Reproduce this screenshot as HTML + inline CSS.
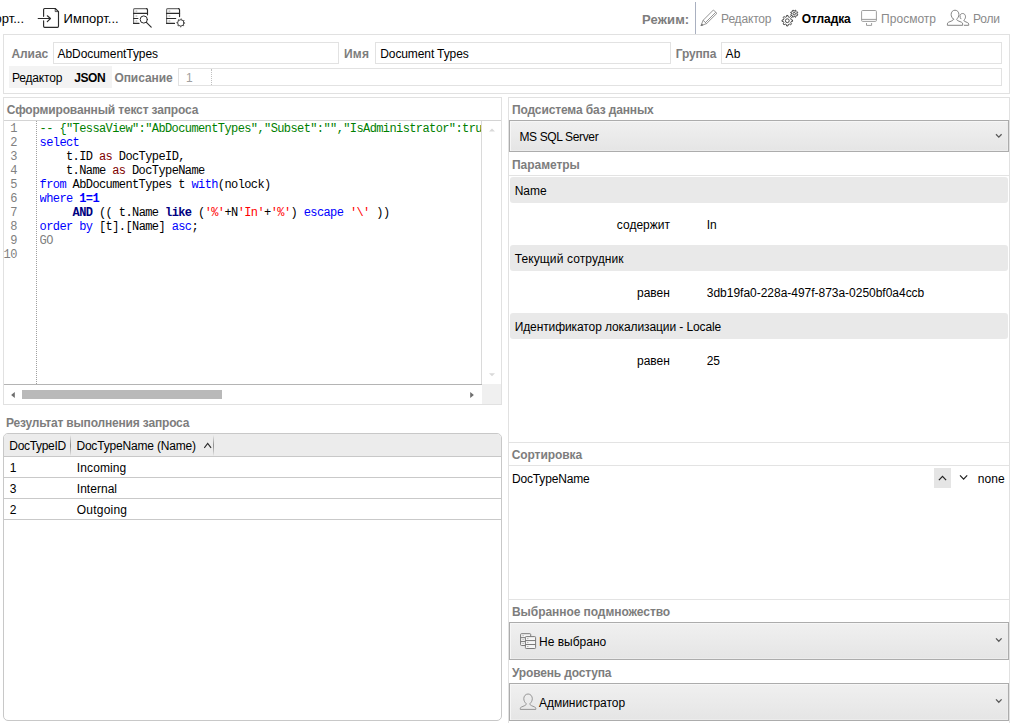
<!DOCTYPE html>
<html><head><meta charset="utf-8"><title>View editor</title>
<style>
html,body{margin:0;padding:0;}
body{width:1012px;height:723px;overflow:hidden;background:#fff;position:relative;font-family:"Liberation Sans", sans-serif;font-size:12px;color:#000;}
.t{position:absolute;white-space:pre;line-height:16px;}
.b{position:absolute;box-sizing:border-box;}

.p{border:1px solid #e1e1e1;background:#fff;}
.in{border:1px solid #e2e2e2;background:#fff;}
.hl{height:1px;background:#e3e3e3;}
.bar{background:#e9e9e9;border-radius:3px;left:510px;width:498px;height:26px;}
.cb{border:1px solid #acacac;background:linear-gradient(#f0f0f0,#e5e5e5);left:509px;width:500px;box-shadow:inset 1px 1px 0 #f6f6f6, inset -1px -1px 0 #ececec;}
.code{position:absolute;left:39.6px;top:122px;width:441px;height:262px;overflow:hidden;font-family:"Liberation Mono", monospace;font-size:12px;letter-spacing:-0.6px;line-height:14px;white-space:pre;color:#000;}
.ln{position:absolute;left:3.5px;top:122px;width:13.3px;text-align:right;font-family:"Liberation Mono", monospace;font-size:12px;letter-spacing:-0.6px;line-height:14px;white-space:pre;color:#808080;}
.c{color:#008000}.k{color:#0000ff}.m{color:#800000}.s{color:#ff0000}.n{color:#000080;font-weight:bold}.kb{color:#0000ff;font-weight:bold}.g{color:#808080}

</style></head><body>
<div class="b p" style="left:3px;top:34px;width:1007px;height:60px;"></div>
<div class="b in" style="left:53px;top:42px;width:286px;height:22px;"></div>
<div class="b in" style="left:375px;top:42px;width:296px;height:22px;"></div>
<div class="b in" style="left:721px;top:42px;width:281px;height:22px;"></div>
<div class="b " style="left:9px;top:66px;width:103px;height:22px;background:#f3f3f3;"></div>
<div class="b in" style="left:178px;top:68px;width:824px;height:18px;"></div>
<div class="b " style="left:211px;top:69px;width:1px;height:16px;border-left:1px dotted #c0c0c0;"></div>
<div class="b " style="left:695px;top:2px;width:1px;height:32px;background:#a9b0c0;"></div>
<div class="b p" style="left:3px;top:97px;width:499px;height:308px;"></div>
<div class="b hl" style="left:4px;top:120px;width:497px;height:1px;background:#d4d4d4;"></div>
<div class="b " style="left:4px;top:384px;width:478px;height:1px;background:#b4b4b4;"></div>
<div class="b " style="left:481px;top:121px;width:1px;height:263px;background:#dadada;"></div>
<div class="b " style="left:482px;top:384px;width:19px;height:20px;background:#f0f0f0;"></div>
<div class="b " style="left:22px;top:390px;width:200px;height:9px;background:#b9b9b9;"></div>
<div class="b " style="left:36px;top:121px;width:1px;height:263px;border-left:1px dotted #a0a0a0;"></div>
<div class="b " style="left:3px;top:433px;width:499px;height:288px;border:1px solid #c8c8c8;border-radius:5px;background:#fff;"></div>
<div class="b " style="left:4px;top:434px;width:497px;height:22px;background:#ececec;border-radius:4px 4px 0 0;"></div>
<div class="b " style="left:4px;top:456px;width:497px;height:1px;background:#c8c8c8;"></div>
<div class="b " style="left:4px;top:477px;width:497px;height:1px;background:#c9c9c9;"></div>
<div class="b " style="left:4px;top:498px;width:497px;height:1px;background:#c9c9c9;"></div>
<div class="b " style="left:4px;top:519px;width:497px;height:1px;background:#c9c9c9;"></div>
<div class="b " style="left:70px;top:435px;width:1px;height:21px;background:linear-gradient(rgba(140,140,140,0),#959595 45%,#959595 55%,rgba(140,140,140,0));"></div>
<div class="b " style="left:213px;top:435px;width:1px;height:21px;background:linear-gradient(rgba(140,140,140,0),#959595 45%,#959595 55%,rgba(140,140,140,0));"></div>
<div class="b p" style="left:508px;top:97px;width:502px;height:640px;"></div>
<div class="b cb" style="left:509px;top:120px;width:500px;height:32px;"></div>
<div class="b hl" style="left:509px;top:175px;width:500px;height:1px;"></div>
<div class="b bar" style="left:510px;top:177px;width:498px;height:26px;"></div>
<div class="b bar" style="left:510px;top:245px;width:498px;height:26px;"></div>
<div class="b bar" style="left:510px;top:313px;width:498px;height:26px;"></div>
<div class="b hl" style="left:509px;top:442px;width:500px;height:1px;"></div>
<div class="b hl" style="left:509px;top:465px;width:500px;height:1px;"></div>
<div class="b " style="left:934px;top:468px;width:17px;height:20px;background:#e5e5e5;"></div>
<div class="b hl" style="left:509px;top:599px;width:500px;height:1px;"></div>
<div class="b cb" style="left:509px;top:622px;width:500px;height:38px;"></div>
<div class="b cb" style="left:509px;top:683px;width:500px;height:38px;"></div>
<span class="t" style="left:63.6px;top:11.0px;font-size:13px;letter-spacing:0.03px;">Импорт...</span>
<span class="t" style="left:642.1px;top:12.0px;font-size:13px;font-weight:700;color:#7d7d7d;letter-spacing:0.11px;">Режим:</span>
<span class="t" style="left:721.1px;top:11.0px;font-size:12px;color:#8a8a8a;letter-spacing:-0.18px;">Редактор</span>
<span class="t" style="left:801.8px;top:11.0px;font-size:12px;font-weight:700;letter-spacing:-0.12px;">Отладка</span>
<span class="t" style="left:881.1px;top:11.0px;font-size:12px;color:#8a8a8a;letter-spacing:0.02px;">Просмотр</span>
<span class="t" style="left:973.1px;top:11.0px;font-size:12px;color:#8a8a8a;letter-spacing:-0.22px;">Роли</span>
<span class="t" style="left:11.4px;top:46.0px;font-size:12px;font-weight:700;color:#7d7d7d;letter-spacing:-0.04px;">Алиас</span>
<span class="t" style="left:57.5px;top:46.0px;font-size:12px;letter-spacing:-0.06px;">AbDocumentTypes</span>
<span class="t" style="left:343.9px;top:46.0px;font-size:12px;font-weight:700;color:#7d7d7d;letter-spacing:0.29px;">Имя</span>
<span class="t" style="left:380.3px;top:46.0px;font-size:12px;letter-spacing:-0.11px;">Document Types</span>
<span class="t" style="left:675.8px;top:46.0px;font-size:12px;font-weight:700;color:#7d7d7d;letter-spacing:-0.16px;">Группа</span>
<span class="t" style="left:725.6px;top:46.0px;font-size:12px;letter-spacing:0.06px;">Ab</span>
<span class="t" style="left:12.0px;top:70.0px;font-size:12px;letter-spacing:-0.18px;">Редактор</span>
<span class="t" style="left:74.3px;top:70.0px;font-size:12px;font-weight:700;letter-spacing:-0.45px;">JSON</span>
<span class="t" style="left:114.4px;top:70.0px;font-size:12px;font-weight:700;color:#7d7d7d;letter-spacing:-0.06px;">Описание</span>
<span class="t" style="left:186.0px;top:70.0px;font-size:12px;color:#a0a0a0;">1</span>
<span class="t" style="left:6.8px;top:102.0px;font-size:12px;font-weight:700;color:#7d7d7d;letter-spacing:-0.15px;">Сформированный текст запроса</span>
<span class="t" style="left:5.9px;top:415.0px;font-size:12px;font-weight:700;color:#7d7d7d;letter-spacing:-0.18px;">Результат выполнения запроса</span>
<span class="t" style="left:9.3px;top:438.0px;font-size:12px;letter-spacing:-0.31px;">DocTypeID</span>
<span class="t" style="left:76.4px;top:438.0px;font-size:12px;letter-spacing:-0.18px;">DocTypeName (Name)</span>
<span class="t" style="left:9.8px;top:460.0px;font-size:12px;">1</span>
<span class="t" style="left:76.8px;top:460.0px;font-size:12px;letter-spacing:0.11px;">Incoming</span>
<span class="t" style="left:9.8px;top:481.0px;font-size:12px;">3</span>
<span class="t" style="left:76.8px;top:481.0px;font-size:12px;letter-spacing:0.03px;">Internal</span>
<span class="t" style="left:9.8px;top:502.0px;font-size:12px;">2</span>
<span class="t" style="left:76.8px;top:502.0px;font-size:12px;letter-spacing:0.22px;">Outgoing</span>
<span class="t" style="left:512.0px;top:102.0px;font-size:12px;font-weight:700;color:#7d7d7d;letter-spacing:-0.13px;">Подсистема баз данных</span>
<span class="t" style="left:519.4px;top:129.0px;font-size:12px;letter-spacing:-0.36px;">MS SQL Server</span>
<span class="t" style="left:512.0px;top:157.0px;font-size:12px;font-weight:700;color:#7d7d7d;letter-spacing:-0.04px;">Параметры</span>
<span class="t" style="left:514.7px;top:183.0px;font-size:12px;letter-spacing:0.02px;">Name</span>
<span class="t" style="left:616.8px;top:217.0px;font-size:12px;letter-spacing:0.02px;">содержит</span>
<span class="t" style="left:706.8px;top:217.0px;font-size:12px;letter-spacing:-0.01px;">In</span>
<span class="t" style="left:514.7px;top:251.0px;font-size:12px;letter-spacing:0.11px;">Текущий сотрудник</span>
<span class="t" style="left:637.0px;top:285.0px;font-size:12px;letter-spacing:-0.02px;">равен</span>
<span class="t" style="left:706.8px;top:285.0px;font-size:12px;letter-spacing:-0.02px;">3db19fa0-228a-497f-873a-0250bf0a4ccb</span>
<span class="t" style="left:514.7px;top:319.0px;font-size:12px;letter-spacing:-0.10px;">Идентификатор локализации - Locale</span>
<span class="t" style="left:637.0px;top:353.0px;font-size:12px;letter-spacing:-0.02px;">равен</span>
<span class="t" style="left:706.8px;top:353.0px;font-size:12px;letter-spacing:-0.18px;">25</span>
<span class="t" style="left:511.7px;top:447.0px;font-size:12px;font-weight:700;color:#7d7d7d;letter-spacing:-0.08px;">Сортировка</span>
<span class="t" style="left:512.0px;top:471.0px;font-size:12px;letter-spacing:-0.16px;">DocTypeName</span>
<span class="t" style="left:977.8px;top:471.0px;font-size:12px;letter-spacing:0.10px;">none</span>
<span class="t" style="left:512.0px;top:604.0px;font-size:12px;font-weight:700;color:#7d7d7d;letter-spacing:-0.06px;">Выбранное подмножество</span>
<span class="t" style="left:539.0px;top:634.0px;font-size:12px;letter-spacing:0.01px;">Не выбрано</span>
<span class="t" style="left:512.0px;top:665.0px;font-size:12px;font-weight:700;color:#7d7d7d;letter-spacing:-0.16px;">Уровень доступа</span>
<span class="t" style="left:539.0px;top:695.0px;font-size:12px;letter-spacing:-0.04px;">Администратор</span>
<span class="t" style="right:987.9px;top:11px;font-size:13px;letter-spacing:0.03px;">Экспорт...</span>
<div class="ln">1
2
3
4
5
6
7
8
9
10</div>
<div class="code"><span class="c">-- {"TessaView":"AbDocumentTypes","Subset":"","IsAdministrator":true,"Params":{}}</span>
<span class="k">select</span>
    t.ID <span class="m">as</span> DocTypeID,
    t.Name <span class="m">as</span> DocTypeName
<span class="k">from</span> AbDocumentTypes t <span class="k">with</span>(nolock)
<span class="k">where</span> <span class="kb">1=1</span>
     <span class="n">AND</span> (( t.Name <span class="n">like</span> (<span class="s">'%'</span>+N<span class="s">'In'</span>+<span class="s">'%'</span>) <span class="k">escape</span> <span class="s">'\'</span> ))
<span class="k">order</span> <span class="k">by</span> [t].[Name] <span class="k">asc</span>;
<span class="g">GO</span>
</div>
<svg style="position:absolute;left:0;top:0" width="1012" height="723" viewBox="0 0 1012 723">
<g fill="none" stroke="#2b2b2b" stroke-width="1.15" stroke-linecap="round" stroke-linejoin="round"><path d="M43.6 16.3V9.5q0-1 1-1H55.2L58.5 11.6V26.3q0 1-1 1H44.6q-1 0-1-1V20.7"/><path d="M55.2 8.6V11.6H58.4" stroke-width="0.8"/><path d="M38.2 18.5H50.4M47.3 15.8L50.5 18.5L47.3 21.6"/></g>
<g fill="none" stroke="#2b2b2b" stroke-width="1.15" stroke-linecap="round"><path d="M133.6 23.4V9.6q0-1 1-1H146.5" stroke="#707070"/><path d="M146.5 8.65q1 0 1 1V14.8"/><path d="M133.6 13.4H147.5M133.6 18.5H137.9M133.6 23.4H139.0"/><path d="M135.9 11.1h1M135.9 16h1M135.9 21h1" stroke="#9a9a9a" stroke-width="0.9"/><circle cx="143.8" cy="19.5" r="3.6" stroke-width="1"/><path d="M146.4 22.3L151.2 27.2"/></g>
<g fill="none" stroke="#2b2b2b" stroke-width="1.15" stroke-linecap="round"><path d="M166.6 23.4V9.6q0-1 1-1H178.55" stroke="#707070"/><path d="M178.55 8.65q1 0 1 1V16.6"/><path d="M166.6 13.4H179.55M166.6 18.5H175.7M166.6 23.4H174.5"/><path d="M168.9 11.1h1M168.9 16h1M168.9 21h1" stroke="#9a9a9a" stroke-width="0.9"/><circle cx="180.8" cy="22.9" r="3.2" stroke-width="0.9"/><circle cx="180.8" cy="22.9" r="3.9" stroke-width="1.0" stroke-dasharray="1.1 1.963" stroke-dashoffset="0.6" stroke-linecap="butt"/></g>
<g fill="none" stroke="#7a7a7a" stroke-width="0.8" stroke-linejoin="round"><path d="M701 25.7L703.1 20.3L713.4 10L716.9 13.3L706.6 23.55Z"/><path d="M703.1 20.3L706.6 23.55M705.6 22.4L715.7 12.3"/><path d="M701 25.7l0.7-1.8l1.2 1.2z" fill="#7a7a7a"/></g>
<g fill="none" stroke="#303030" stroke-width="0.85" stroke-linejoin="round"><path d="M786.43 16.80 L786.59 15.45 L788.01 15.45 L788.17 16.80 L789.44 17.32 L790.52 16.49 L791.51 17.48 L790.68 18.56 L791.20 19.83 L792.55 19.99 L792.55 21.41 L791.20 21.57 L790.68 22.84 L791.51 23.92 L790.52 24.91 L789.44 24.08 L788.17 24.60 L788.01 25.95 L786.59 25.95 L786.43 24.60 L785.16 24.08 L784.08 24.91 L783.09 23.92 L783.92 22.84 L783.40 21.57 L782.05 21.41 L782.05 19.99 L783.40 19.83 L783.92 18.56 L783.09 17.48 L784.08 16.49 L785.16 17.32Z"/><circle cx="787.3" cy="20.7" r="1.9"/><path d="M794.66 11.04 L795.15 10.12 L796.06 10.50 L795.75 11.49 L796.41 12.15 L797.40 11.84 L797.78 12.75 L796.86 13.24 L796.86 14.16 L797.78 14.65 L797.40 15.56 L796.41 15.25 L795.75 15.91 L796.06 16.90 L795.15 17.28 L794.66 16.36 L793.74 16.36 L793.25 17.28 L792.34 16.90 L792.65 15.91 L791.99 15.25 L791.00 15.56 L790.62 14.65 L791.54 14.16 L791.54 13.24 L790.62 12.75 L791.00 11.84 L791.99 12.15 L792.65 11.49 L792.34 10.50 L793.25 10.12 L793.74 11.04Z"/><circle cx="794.2" cy="13.7" r="1.25"/></g>
<g fill="none" stroke="#999" stroke-width="0.95"><rect x="861.6" y="10.5" width="14.8" height="10.9" rx="1"/><path d="M861.6 19.4H876.4M866.5 23V25.4H871.6V23"/></g>
<g fill="none" stroke="#7d7d7d" stroke-width="0.95" stroke-linejoin="round" stroke-linecap="round"><path d="M953.35 19.1c-1.1-1-2.2-2.6-2.2-4.6c0-2.4 1.5-4.3 3.85-4.3c2.4 0 3.9 1.9 3.9 4.3c0 2-1.1 3.6-2.2 4.6c0 1 .4 1.3 1.4 1.7l3.3 1.4c.9.4 1.25.9 1.25 1.7v1.4H947.4v-1.4c0-.8.35-1.3 1.25-1.7l3.3-1.4c1-.4 1.4-.7 1.4-1.7z"/><path d="M960 15.4c.3-1.2 1.3-1.9 2.6-1.9c1.8 0 2.9 1.4 2.9 3.3c0 1.5-.8 2.6-1.6 3.4c0 .8.3 1 1 1.3l2.6 1.1c.8.35 1.2.8 1.2 1.5v1.2H964.3"/><path d="M960 16.2c0 1 .3 1.9.9 2.6"/></g>
<path d="M996 134.20000000000002L998.8 137.10000000000002L1001.6 134.20000000000002" fill="none" stroke="#5a5a5a" stroke-width="1.3"/>
<path d="M996 638.4L998.8 641.3L1001.6 638.4" fill="none" stroke="#5a5a5a" stroke-width="1.3"/>
<path d="M996 699.4L998.8 702.3L1001.6 699.4" fill="none" stroke="#5a5a5a" stroke-width="1.3"/>
<path d="M938.9 480.2L942.5 476.3L946.1 480.2" fill="none" stroke="#222" stroke-width="1.2"/>
<path d="M960 475.3L963.6 479.2L967.2 475.3" fill="none" stroke="#222" stroke-width="1.2"/>
<path d="M204.3 447.8L207.7 443.4L211.1 447.8" fill="none" stroke="#2a2a2a" stroke-width="1.1"/>
<path d="M14.8 392.1V397.9L11.1 395Z" fill="#6e6e6e"/>
<path d="M470.2 392.1V397.9L473.9 395Z" fill="#6e6e6e"/>
<path d="M489 131.6L492 128.6L495 131.6Z" fill="#d9d9d9"/>
<path d="M489 373.2L492 376.2L495 373.2Z" fill="#d9d9d9"/>
<g fill="none" stroke="#7a7a7a" stroke-width="1"><rect x="520.6" y="633.7" width="10.1" height="11.8" rx="0.8" fill="#f5f5f5"/><path d="M520.6 637.63H530.7M520.6 641.57H530.7"/><path d="M522.6 635.67h0.9M522.6 639.60h0.9M522.6 643.53h0.9" stroke-width="0.8"/><rect x="525.4" y="636.6" width="10.2" height="11.9" rx="0.8" fill="#f5f5f5"/><path d="M525.4 640.57H535.6M525.4 644.53H535.6"/><path d="M527.4 638.58h0.9M527.4 642.55h0.9M527.4 646.52h0.9" stroke-width="0.8"/></g>
<g fill="none" stroke="#808080" stroke-width="0.8" stroke-linejoin="round"><path d="M526.2 703.7c-1.2-1.1-2.4-2.8-2.4-5c0-2.6 1.7-4.7 4.3-4.7c2.5 0 4.2 2.1 4.2 4.7c0 2.2-1.2 3.9-2.4 5c0 1 .4 1.4 1.5 1.9l3.2 1.4c.9.4 1.2.8 1.2 1.5v.9H520.3v-.9c0-.7.3-1.1 1.2-1.5l3.2-1.4c1.1-.5 1.5-.9 1.5-1.9z"/></g>
</svg>
</body></html>
